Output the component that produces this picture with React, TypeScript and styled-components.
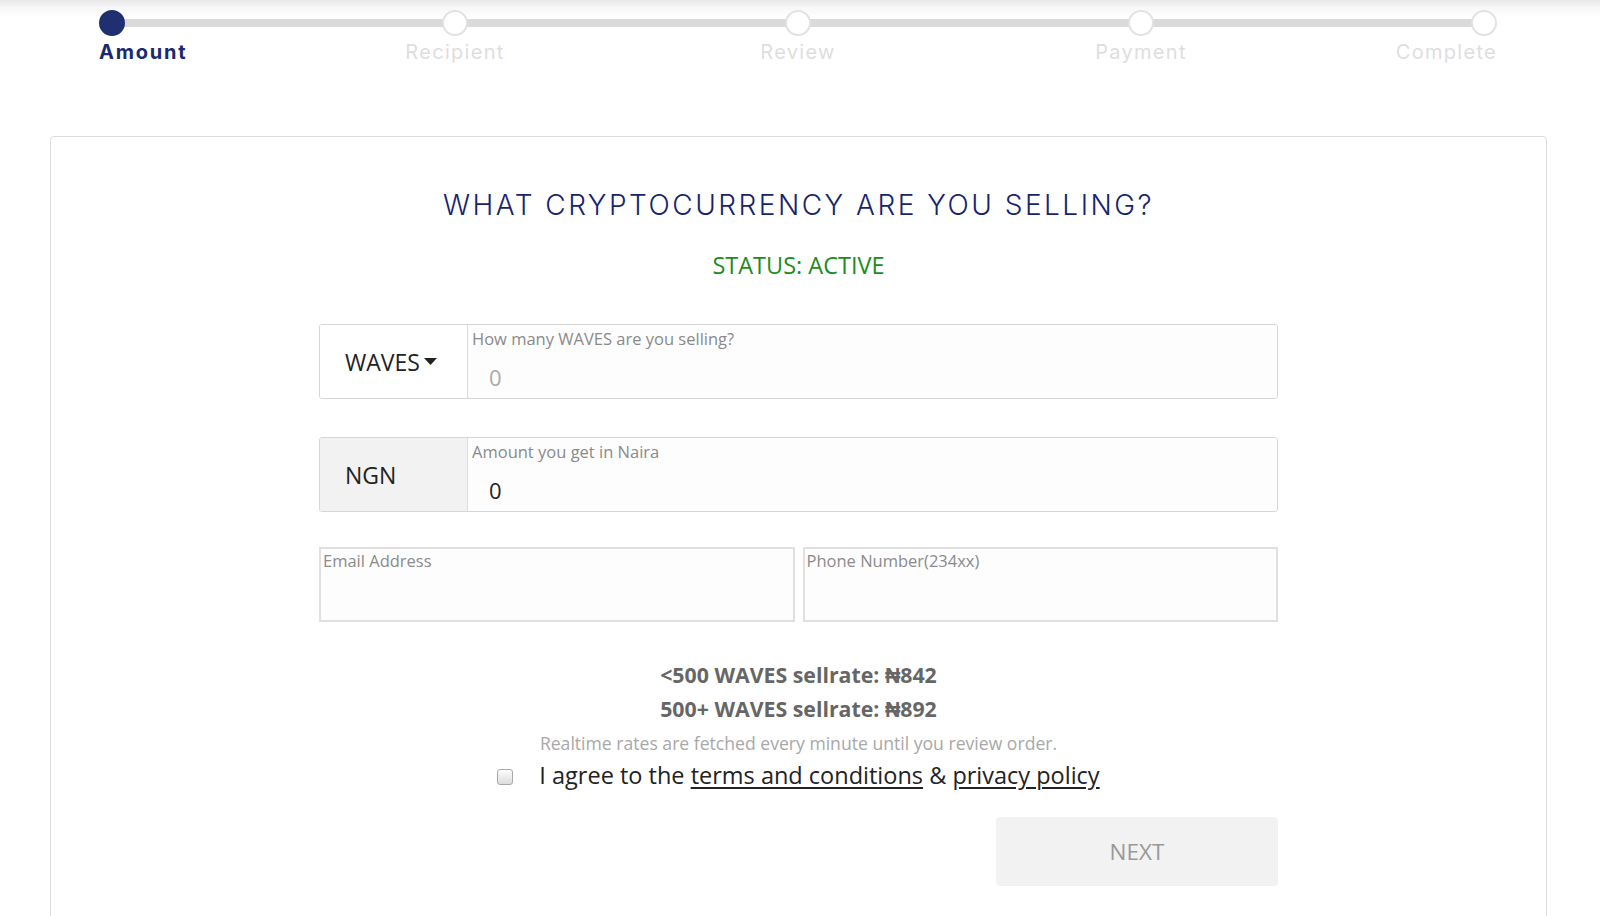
import React, { useState } from 'react';
import styled, { createGlobalStyle } from 'styled-components';

//
// -- Global

const GlobalStyle = createGlobalStyle`
  html, body {
    margin: 0;
    padding: 0;
    background: #fff;
  }

  body {
    font-family: 'Open Sans', 'Liberation Sans', sans-serif;
    color: #222;
  }

  * {
    box-sizing: border-box;
  }
`;

//
// -- Styled Components

const Page = styled.div`
  min-height: 916px;
  padding: 10px 53px 0 50px;
  background: linear-gradient(to bottom, #e8e8e8 0, #f7f7f7 8px, #fff 18px) no-repeat;
`;

const Stepper = styled.div`
  position: relative;
  display: flex;
  justify-content: space-between;
  padding: 0 50px 0 49px;
`;

const Track = styled.div`
  position: absolute;
  top: 9px;
  left: 62px;
  right: 63px;
  height: 8px;
  background: #dadada;
`;

const Step = styled.div<{ $align: 'flex-start' | 'center' | 'flex-end' }>`
  position: relative;
  display: flex;
  flex-direction: column;
  align-items: ${(p) => p.$align};
  width: 26px;
`;

const Dot = styled.div<{ $active?: boolean }>`
  width: 26px;
  height: 26px;
  border-radius: 50%;
  background: ${(p) => (p.$active ? '#1f2f70' : '#fff')};
  border: 2px solid ${(p) => (p.$active ? '#1f2f70' : '#e2e2e2')};
`;

const StepLabel = styled.span<{ $active?: boolean }>`
  margin-top: 4px;
  white-space: nowrap;
  font-family: Inter, 'DejaVu Sans', sans-serif;
  font-size: 20px;
  line-height: 24px;
  letter-spacing: ${(p) => (p.$active ? '1.8px' : '1.3px')};
  font-weight: ${(p) => (p.$active ? 700 : 400)};
  color: ${(p) => (p.$active ? '#1a2a6c' : '#dedede')};
`;

const Card = styled.section`
  margin-top: 72px;
  border: 1px solid #dcdcdc;
  border-radius: 4px;
  padding: 51px 0 80px;
`;

const Title = styled.h2`
  margin: 0;
  text-align: center;
  font-family: Inter, 'DejaVu Sans', sans-serif;
  font-weight: 300;
  font-size: 28px;
  line-height: 34px;
  letter-spacing: 2.5px;
  color: #16246e;
`;

const Status = styled.div`
  margin-top: 28px;
  text-align: center;
  font-size: 23.5px;
  line-height: 30px;
  color: #1c8c1c;
`;

const Form = styled.div`
  width: 959px;
  margin: 44px auto 0;
`;

const InputGroup = styled.div`
  display: flex;
  height: 75px;
  border: 1px solid #d6d6d6;
  border-radius: 3px;
  overflow: hidden;

  & + & {
    margin-top: 38px;
  }
`;

const Addon = styled.div<{ $muted?: boolean }>`
  display: flex;
  align-items: center;
  gap: 4px;
  width: 148px;
  padding-left: 25px;
  border-right: 1px solid #dcdcdc;
  background: ${(p) => (p.$muted ? '#f2f2f2' : '#fff')};
  font-size: 23px;
  color: #222;
`;

const Field = styled.div`
  flex: 1;
  display: flex;
  flex-direction: column;
  justify-content: space-between;
  padding: 3px 0 6px 4px;
  background: #fdfdfd;
`;

const FieldLabel = styled.span`
  font-size: 16.5px;
  line-height: 22px;
  color: #8a8a8a;
`;

const FieldValue = styled.span<{ $placeholder?: boolean }>`
  padding-left: 17px;
  font-size: 22px;
  line-height: 30px;
  color: ${(p) => (p.$placeholder ? '#aaa' : '#222')};
`;

const ContactRow = styled.div`
  display: grid;
  grid-template-columns: 1fr 1fr;
  gap: 8px;
  margin-top: 35px;
`;

const ContactField = styled.div`
  height: 75px;
  padding: 1px 0 0 2px;
  border: 2px solid #e0e0e0;
  background: #fdfdfd;
`;

const Rates = styled.div`
  margin-top: 36px;
  text-align: center;
`;

const Rate = styled.div`
  font-size: 21.3px;
  line-height: 34px;
  font-weight: 700;
  color: #666;
`;

const Note = styled.div`
  font-size: 17.6px;
  line-height: 34px;
  color: #a8a8a8;
`;

const Agree = styled.label`
  display: flex;
  justify-content: center;
  align-items: center;
  gap: 26px;
  font-size: 23.5px;
  line-height: 31px;
  color: #222;

  a {
    color: inherit;
    text-decoration: underline;
    text-underline-offset: 3px;
  }
`;

const Check = styled.input`
  appearance: none;
  margin: 2px 0 0;
  width: 16px;
  height: 16px;
  border: 1px solid #a9a9a9;
  border-radius: 3px;
  background: linear-gradient(to bottom, #fcfcfc, #dcdcdc);

  &:checked {
    background: #1f2f70;
  }
`;

const Actions = styled.div`
  display: flex;
  justify-content: flex-end;
  margin-top: 26px;
`;

const NextButton = styled.button`
  width: 282px;
  height: 69px;
  border: none;
  border-radius: 4px;
  background: #f2f2f2;
  font-family: 'Open Sans', 'Liberation Sans', sans-serif;
  font-size: 22.5px;
  color: #999;
`;

const Caret = () => (
  <svg width="13" height="7" viewBox="0 0 13 7" aria-hidden="true">
    <path d="M0 0 H13 L6.5 7 Z" fill="#222" />
  </svg>
);

//
// -- App Component --

const steps = ['Amount', 'Recipient', 'Review', 'Payment', 'Complete'];

const alignFor = (i: number): 'flex-start' | 'center' | 'flex-end' =>
  i === 0 ? 'flex-start' : i === steps.length - 1 ? 'flex-end' : 'center';

const App: React.FunctionComponent = () => {
  const [agreed, setAgreed] = useState(false);
  const current = 0;

  return (
    <Page>
      <GlobalStyle />
      <Stepper>
        <Track />
        {steps.map((step, i) => (
          <Step key={step} $align={alignFor(i)}>
            <Dot $active={i === current} />
            <StepLabel $active={i === current}>{step}</StepLabel>
          </Step>
        ))}
      </Stepper>

      <Card>
        <Title>WHAT CRYPTOCURRENCY ARE YOU SELLING?</Title>
        <Status>STATUS: ACTIVE</Status>

        <Form>
          <InputGroup>
            <Addon>
              WAVES
              <Caret />
            </Addon>
            <Field>
              <FieldLabel>How many WAVES are you selling?</FieldLabel>
              <FieldValue $placeholder>0</FieldValue>
            </Field>
          </InputGroup>

          <InputGroup>
            <Addon $muted>NGN</Addon>
            <Field>
              <FieldLabel>Amount you get in Naira</FieldLabel>
              <FieldValue>0</FieldValue>
            </Field>
          </InputGroup>

          <ContactRow>
            <ContactField>
              <FieldLabel>Email Address</FieldLabel>
            </ContactField>
            <ContactField>
              <FieldLabel>Phone Number(234xx)</FieldLabel>
            </ContactField>
          </ContactRow>

          <Rates>
            <Rate>&lt;500 WAVES sellrate: ₦842</Rate>
            <Rate>500+ WAVES sellrate: ₦892</Rate>
            <Note>Realtime rates are fetched every minute until you review order.</Note>
          </Rates>

          <Agree>
            <Check
              type="checkbox"
              checked={agreed}
              onChange={() => setAgreed(!agreed)}
            />
            <span>
              I agree to the <a href="#terms">terms and conditions</a> &amp;{' '}
              <a href="#privacy">privacy policy</a>
            </span>
          </Agree>

          <Actions>
            <NextButton type="button">NEXT</NextButton>
          </Actions>
        </Form>
      </Card>
    </Page>
  );
};

export default App;
